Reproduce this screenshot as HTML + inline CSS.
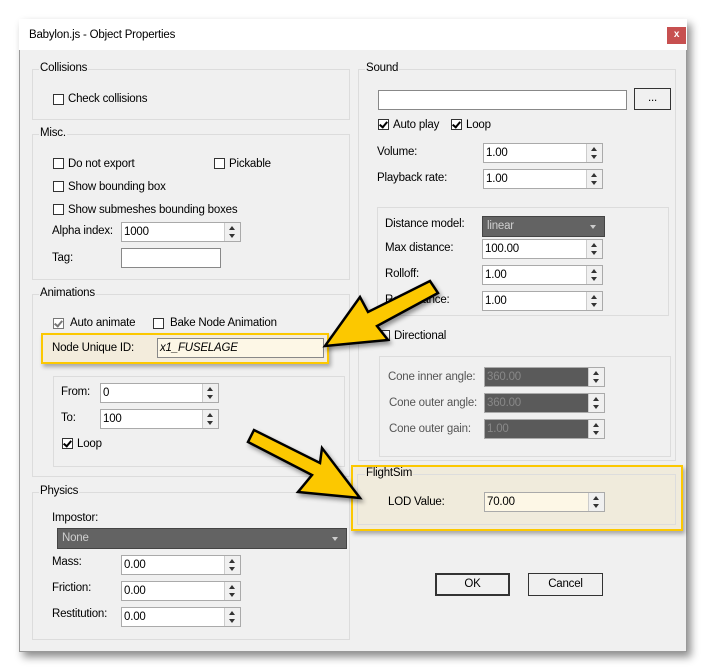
<!DOCTYPE html>
<html><head><meta charset="utf-8"><style>
body{margin:0;width:707px;height:672px;background:#fff;position:relative;overflow:hidden;font-family:"Liberation Sans",sans-serif;font-size:11.5px;letter-spacing:-0.2px;color:#000}
.a{position:absolute}
.win{left:19px;top:19px;width:668px;height:633px;background:#f0f0f0;border:1px solid #999;box-sizing:border-box;box-shadow:4px 5px 8px rgba(0,0,0,.45)}
.tb{left:19px;top:19px;width:668px;height:31px;background:#fff}
.gb{position:absolute;border:1px solid #dcdcdc;box-sizing:border-box}
.gl{position:absolute;background:#f0f0f0;padding:0 1px;line-height:13px}
.cb{position:absolute;width:11px;height:11px;border:1px solid #333;background:#fff;box-sizing:border-box}
.cb.k::after{content:"";position:absolute;left:2px;top:0px;width:3px;height:6px;border:solid #000;border-width:0 2px 2px 0;transform:rotate(40deg)}
.cb.g{border-color:#777}.cb.g::after{border-color:#777}
.t{position:absolute;line-height:14px;white-space:nowrap}
.in{position:absolute;height:20px;border:1px solid #aaa;background:#fff;box-sizing:border-box;padding:1px 2px;line-height:16px}
.sp{position:absolute;right:0;top:0;width:15px;height:18px;border-left:1px solid #ccc;background:#f0f0f0}
.sp::before{content:"";position:absolute;left:4px;top:3px;border:3px solid transparent;border-bottom:4px solid #333;border-top:0}
.sp::after{content:"";position:absolute;left:4px;top:11px;border:3px solid transparent;border-top:4px solid #333;border-bottom:0}
.dk{background:#5a5a5a;color:#888}
.dd{position:absolute;background:#636363;color:#cfcfcf;border:1px solid #444;box-sizing:border-box;padding:2px 4px;line-height:14px}
.dd::after{content:"";position:absolute;right:8px;top:8px;border:3px solid transparent;border-top:4px solid #ccc}
.btn{position:absolute;border:1px solid #333;box-sizing:border-box;text-align:center;background:#f0f0f0}
</style></head><body>
<div class="a win"></div>
<div class="a tb"></div>
<div class="t" style="left:29px;top:28px">Babylon.js - Object Properties</div>
<div class="a" style="left:667px;top:27px;width:19px;height:17px;background:#c75050;color:#fff;font-weight:bold;font-size:10px;text-align:center;line-height:16px">x</div>

<div class="gb" style="left:32px;top:69px;width:318px;height:51px"></div>
<div class="gl" style="left:39px;top:62px">Collisions</div>
<div class="cb" style="left:53px;top:94px"></div><div class="t" style="left:68px;top:92px">Check collisions</div>

<div class="gb" style="left:32px;top:134px;width:318px;height:146px"></div>
<div class="gl" style="left:39px;top:127px">Misc.</div>
<div class="cb" style="left:53px;top:158px"></div><div class="t" style="left:68px;top:157px">Do not export</div>
<div class="cb" style="left:214px;top:158px"></div><div class="t" style="left:229px;top:157px">Pickable</div>
<div class="cb" style="left:53px;top:181px"></div><div class="t" style="left:68px;top:180px">Show bounding box</div>
<div class="cb" style="left:53px;top:204px"></div><div class="t" style="left:68px;top:203px">Show submeshes bounding boxes</div>
<div class="t" style="left:52px;top:224px">Alpha index:</div>
<div class="in" style="left:121px;top:222px;width:120px">1000<div class="sp"></div></div>
<div class="t" style="left:52px;top:251px">Tag:</div>
<div class="in" style="left:121px;top:248px;width:100px;border-color:#888"></div>

<div class="gb" style="left:32px;top:294px;width:318px;height:183px"></div>
<div class="gl" style="left:39px;top:287px">Animations</div>
<div class="cb k g" style="left:53px;top:318px"></div><div class="t" style="left:70px;top:316px">Auto animate</div>
<div class="cb" style="left:153px;top:318px"></div><div class="t" style="left:170px;top:316px">Bake Node Animation</div>
<div class="a" style="left:41px;top:333px;width:288px;height:31px;background:#f3ecdc;border:2px solid #fcc800;box-sizing:border-box;box-shadow:2px 3px 4px rgba(0,0,0,.3)"></div>
<div class="t" style="left:52px;top:341px">Node Unique ID:</div>
<div class="in" style="left:157px;top:338px;width:167px;background:#fdf7e6;border-color:#888;font-style:italic">x1_FUSELAGE</div>
<div class="gb" style="left:53px;top:376px;width:292px;height:91px"></div>
<div class="t" style="left:61px;top:385px">From:</div>
<div class="in" style="left:100px;top:383px;width:119px">0<div class="sp"></div></div>
<div class="t" style="left:61px;top:411px">To:</div>
<div class="in" style="left:100px;top:409px;width:119px">100<div class="sp"></div></div>
<div class="cb k" style="left:62px;top:438px"></div><div class="t" style="left:77px;top:437px">Loop</div>

<div class="gb" style="left:32px;top:492px;width:318px;height:148px"></div>
<div class="gl" style="left:39px;top:485px">Physics</div>
<div class="t" style="left:52px;top:511px">Impostor:</div>
<div class="dd" style="left:57px;top:528px;width:290px;height:21px">None</div>
<div class="t" style="left:52px;top:555px">Mass:</div>
<div class="in" style="left:121px;top:555px;width:120px">0.00<div class="sp"></div></div>
<div class="t" style="left:52px;top:581px">Friction:</div>
<div class="in" style="left:121px;top:581px;width:120px">0.00<div class="sp"></div></div>
<div class="t" style="left:52px;top:607px">Restitution:</div>
<div class="in" style="left:121px;top:607px;width:120px">0.00<div class="sp"></div></div>

<div class="gb" style="left:358px;top:69px;width:318px;height:392px"></div>
<div class="gl" style="left:365px;top:62px">Sound</div>
<div class="in" style="left:378px;top:90px;width:249px;border-color:#888"></div>
<div class="btn" style="left:634px;top:88px;width:37px;height:22px;line-height:18px">...</div>
<div class="cb k" style="left:378px;top:119px"></div><div class="t" style="left:393px;top:118px">Auto play</div>
<div class="cb k" style="left:451px;top:119px"></div><div class="t" style="left:466px;top:118px">Loop</div>
<div class="t" style="left:377px;top:145px">Volume:</div>
<div class="in" style="left:483px;top:143px;width:120px">1.00<div class="sp"></div></div>
<div class="t" style="left:377px;top:171px">Playback rate:</div>
<div class="in" style="left:483px;top:169px;width:120px">1.00<div class="sp"></div></div>
<div class="gb" style="left:377px;top:207px;width:292px;height:109px"></div>
<div class="t" style="left:385px;top:217px">Distance model:</div>
<div class="dd" style="left:482px;top:216px;width:123px;height:21px">linear</div>
<div class="t" style="left:385px;top:241px">Max distance:</div>
<div class="in" style="left:482px;top:239px;width:121px">100.00<div class="sp"></div></div>
<div class="t" style="left:385px;top:267px">Rolloff:</div>
<div class="in" style="left:482px;top:265px;width:121px">1.00<div class="sp"></div></div>
<div class="t" style="left:385px;top:293px">Ref distance:</div>
<div class="in" style="left:482px;top:291px;width:121px">1.00<div class="sp"></div></div>
<div class="cb" style="left:379px;top:330px"></div><div class="t" style="left:394px;top:329px">Directional</div>
<div class="gb" style="left:379px;top:356px;width:292px;height:101px"></div>
<div class="t" style="left:388px;top:370px;color:#555">Cone inner angle:</div>
<div class="in dk" style="left:484px;top:367px;width:121px">360.00<div class="sp"></div></div>
<div class="t" style="left:389px;top:396px;color:#555">Cone outer angle:</div>
<div class="in dk" style="left:484px;top:393px;width:121px">360.00<div class="sp"></div></div>
<div class="t" style="left:389px;top:422px;color:#555">Cone outer gain:</div>
<div class="in dk" style="left:484px;top:419px;width:121px">1.00<div class="sp"></div></div>

<div class="a" style="left:351px;top:465px;width:332px;height:66px;background:#f0ebdc;border:2px solid #fcc800;box-sizing:border-box;box-shadow:2px 3px 4px rgba(0,0,0,.3)"></div>
<div class="gb" style="left:357px;top:474px;width:319px;height:51px;border-color:#ddd"></div>
<div class="gl" style="left:365px;top:467px;background:#f0ebdc">FlightSim</div>
<div class="t" style="left:388px;top:495px">LOD Value:</div>
<div class="in" style="left:484px;top:492px;width:121px;background:#fdf7e6">70.00<div class="sp"></div></div>

<div class="btn" style="left:435px;top:573px;width:75px;height:23px;border-width:2px;line-height:19px">OK</div>
<div class="btn" style="left:528px;top:573px;width:75px;height:23px;line-height:21px">Cancel</div>

<svg class="a" style="left:0;top:0" width="707" height="672">
<g fill="#fcc800" stroke="#000" stroke-width="2.5" stroke-linejoin="miter" style="filter:drop-shadow(2px 3px 2px rgba(0,0,0,.4))">
<polygon points="325,346 360,297 368,312 430,281 438,293 377,326 388,340"/>
<polygon points="360,498 298,492 312,475 248,442 254,430 320,463 322,448"/>
</g></svg>
</body></html>
